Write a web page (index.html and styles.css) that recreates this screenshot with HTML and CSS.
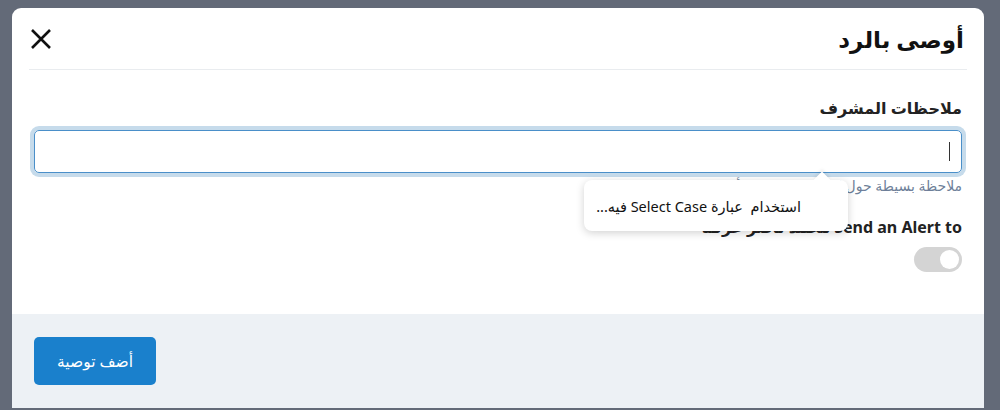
FILE: index.html
```html
<!DOCTYPE html>
<html lang="ar" dir="rtl">
<head>
<meta charset="utf-8">
<link rel="stylesheet" href="styles.css">
</head>
<body>
<div class="overlay">
  <div class="modal">
    <div class="modal-header">
      <h2 class="modal-title">أوصى بالرد</h2>
      <button class="close-btn" aria-label="إغلاق">
        <svg width="22" height="22" viewBox="0 0 22 22"><path d="M2 2 L20 20 M20 2 L2 20" stroke="#111" stroke-width="2.6" fill="none"/></svg>
      </button>
    </div>
    <div class="modal-body">
      <label class="field-label">ملاحظات المشرف</label>
      <div class="text-input"><span class="caret"></span></div>
      <div class="hint">ملاحظة بسيطة حول التوصية ستظهر للأعضاء</div>
      <label class="field-label alert-label">Send an Alert to محمد ناصر عرفه</label>
      <div class="toggle"><span class="knob"></span></div>
      <div class="tooltip">
        <span class="tooltip-text">استخدام  عبارة Select Case فيه...</span>
      </div>
    </div>
    <div class="modal-footer">
      <button class="primary-btn">أضف توصية</button>
    </div>
  </div>
</div>
</body>
</html>
```

FILE: styles.css
```css
* { box-sizing: border-box; }
html, body { margin: 0; padding: 0; }
body {
  width: 1000px;
  height: 410px;
  overflow: hidden;
  background: #636a78;
  font-family: "Noto Sans", "DejaVu Sans", sans-serif;
}
.overlay {
  direction: ltr;
  padding: 8px 16px 0 12px;
  height: 410px;
}
.modal {
  direction: rtl;
  background: #fff;
  border-radius: 9px 9px 0 0;
  width: 972px;
  height: 400px;
  display: flex;
  flex-direction: column;
  overflow: hidden;
}
.modal-header {
  display: flex;
  align-items: center;
  justify-content: space-between;
  height: 62px;
  margin: 0 17px;
  border-bottom: 1px solid #e9ecef;
}
.modal-title {
  margin: 0 3px 0 0;
  font-size: 23px;
  font-weight: 700;
  color: #111;
}
.close-btn {
  background: none;
  border: none;
  padding: 0;
  margin-left: 1px;
  width: 22px;
  height: 22px;
  display: flex;
}
.modal-body {
  position: relative;
  flex: 1;
  padding: 26px 22px 0 22px;
}
.field-label {
  display: block;
  font-size: 16px;
  font-weight: 700;
  color: #222;
  line-height: 24px;
}
.text-input {
  margin-top: 10px;
  height: 43px;
  border: 1px solid #4a8fc9;
  border-radius: 5px;
  box-shadow: 0 0 0 4px #c6dbeb;
  display: flex;
  align-items: center;
  padding-right: 11px;
}
.caret {
  display: inline-block;
  width: 1px;
  height: 19px;
  background: #333;
}
.hint {
  margin-top: 4px;
  font-size: 14px;
  color: #6e7f99;
  line-height: 18px;
}
.alert-label {
  margin-top: 20px;
}
.toggle {
  margin-top: 8px;
  width: 48px;
  height: 25px;
  border-radius: 13px;
  background: #d4d4d4;
  position: relative;
}
.knob {
  position: absolute;
  right: 3px;
  top: 3px;
  width: 19px;
  height: 19px;
  border-radius: 50%;
  background: #fff;
}
.tooltip {
  position: absolute;
  left: 572px;
  top: 110px;
  width: 264px;
  height: 51px;
  background: #fff;
  border-radius: 8px;
  box-shadow: 0 2px 8px rgba(0,0,0,0.18);
  display: flex;
  align-items: center;
  padding-right: 47px;
}
.tooltip::before {
  content: "";
  position: absolute;
  top: -6px;
  left: 232px;
  width: 12px;
  height: 12px;
  background: #fff;
  transform: rotate(45deg);
  box-shadow: -2px -2px 3px rgba(0,0,0,0.06);
}
.tooltip-text {
  position: relative;
  font-size: 14.5px;
  color: #111;
  white-space: pre;
}
.modal-footer {
  height: 94px;
  background: #edf1f5;
  padding: 23px 22px;
  display: flex;
  justify-content: flex-end;
}
.primary-btn {
  width: 122px;
  height: 48px;
  background: #1a80cc;
  color: #fff;
  border: none;
  border-radius: 5px;
  font-family: inherit;
  font-size: 15.5px;
}
```
